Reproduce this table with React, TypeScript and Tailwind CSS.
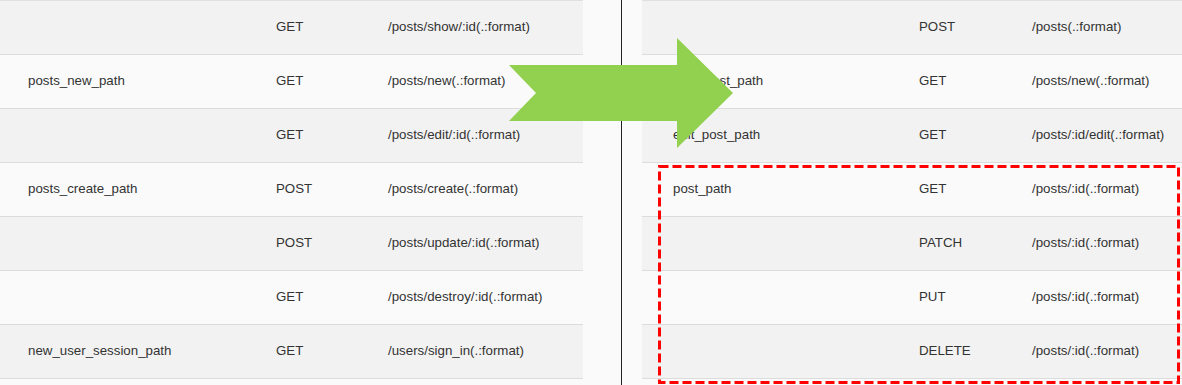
import React from 'react';

type Route = { name: string; verb: string; path: string };

const leftRoutes: Route[] = [
  { name: '', verb: 'GET', path: '/posts/show/:id(.:format)' },
  { name: 'posts_new_path', verb: 'GET', path: '/posts/new(.:format)' },
  { name: '', verb: 'GET', path: '/posts/edit/:id(.:format)' },
  { name: 'posts_create_path', verb: 'POST', path: '/posts/create(.:format)' },
  { name: '', verb: 'POST', path: '/posts/update/:id(.:format)' },
  { name: '', verb: 'GET', path: '/posts/destroy/:id(.:format)' },
  { name: 'new_user_session_path', verb: 'GET', path: '/users/sign_in(.:format)' },
];

const rightRoutes: Route[] = [
  { name: '', verb: 'POST', path: '/posts(.:format)' },
  { name: 'new_post_path', verb: 'GET', path: '/posts/new(.:format)' },
  { name: 'edit_post_path', verb: 'GET', path: '/posts/:id/edit(.:format)' },
  { name: 'post_path', verb: 'GET', path: '/posts/:id(.:format)' },
  { name: '', verb: 'PATCH', path: '/posts/:id(.:format)' },
  { name: '', verb: 'PUT', path: '/posts/:id(.:format)' },
  { name: '', verb: 'DELETE', path: '/posts/:id(.:format)' },
];

const RouteTable: React.FC<{ routes: Route[]; side: 'left' | 'right' }> = ({ routes, side }) => {
  const cols =
    side === 'left'
      ? 'grid grid-cols-[248px_112px_1fr] pl-[28px]'
      : 'grid grid-cols-[246px_113px_1fr] pl-[31px]';
  return (
    <div className="border-t border-[#e0e0e0]">
      {routes.map((r, i) => (
        <div
          key={i}
          className={`${cols} h-[54px] items-center border-b border-[#dcdcdc] whitespace-nowrap ${
            i % 2 === 0 ? 'bg-[#f2f2f2]' : ''
          }`}
        >
          <span className="-translate-y-px">{r.name}</span>
          <span className="-translate-y-px">{r.verb}</span>
          <span className="-translate-y-px">{r.path}</span>
        </div>
      ))}
    </div>
  );
};

export default function App() {
  return (
    <div
      className="relative w-[1182px] h-[385px] overflow-hidden bg-[#fafafa] text-[13.3px] text-[#333]"
      style={{ fontFamily: '"Liberation Sans", Arial, sans-serif' }}
    >
      <div className="flex h-full">
        <div className="w-[583px] shrink-0 overflow-hidden">
          <RouteTable routes={leftRoutes} side="left" />
        </div>
        <div className="w-[38px] shrink-0" />
        <div className="w-px shrink-0 bg-[#222]" />
        <div className="w-[20px] shrink-0" />
        <div className="flex-1 overflow-hidden">
          <RouteTable routes={rightRoutes} side="right" />
        </div>
      </div>

      {/* annotations: arrow + dashed highlight */}
      <svg
        className="absolute left-0 top-0 pointer-events-none"
        width="1182"
        height="385"
        viewBox="0 0 1182 385"
      >
        <polygon
          points="509,65 677,65 677,38 733,93 677,148 677,121 509,121 536,93"
          fill="#92d050"
        />
        <rect
          x="659.5"
          y="166.5"
          width="519"
          height="216"
          fill="none"
          stroke="#ff0000"
          strokeWidth="3"
          strokeDasharray="9 4"
        />
      </svg>
    </div>
  );
}
